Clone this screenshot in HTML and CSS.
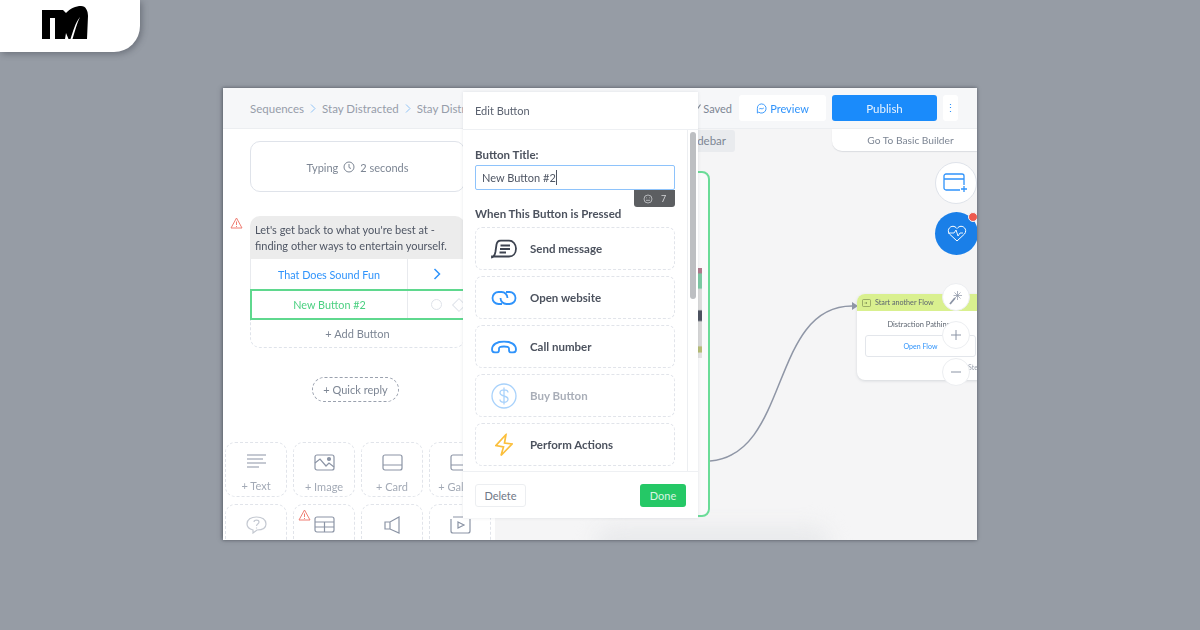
FILE: index.html
```html
<!DOCTYPE html>
<html lang="en">
<head>
    <meta charset="UTF-8">
    <title>Edit Button</title>
    <link rel="stylesheet" href="styles.css">
</head>
<body>
    <div class="logo-tab">
        <svg width="48" height="33" viewBox="0 0 48 33"><path d="M1 4H22L25 7C29 2.500 35 0 40 0C45 0 47 5 47 10L46 33H31.500C34 25 36 17 39 11C34 17 32 26 29.500 33H27.500L25 27L24 33H14V12H9V33H1Z" fill="#000"/></svg>
    </div>

    <div class="window">
        <!-- Top bar -->
        <div class="topbar">
            <div class="crumbs">
                <span>Sequences</span>
                <svg class="crumb-sep" width="6" height="9" viewBox="0 0 6 9" fill="none" stroke="#8fc3f7"><path d="M1 .5L5 4.500L1 8.500"/></svg>
                <span>Stay Distracted</span>
                <svg class="crumb-sep" width="6" height="9" viewBox="0 0 6 9" fill="none" stroke="#8fc3f7"><path d="M1 .5L5 4.500L1 8.500"/></svg>
                <span>Stay Distracted</span>
            </div>
            <div class="top-actions">
                <span class="saved">
                    <svg width="7" height="8" viewBox="0 0 7 8" fill="none" stroke="#7d8694" stroke-width="1.200"><path d="M.5 5L2 7L6.500 .5"/></svg>
                    Saved
                </span>
                <button class="preview-btn">
                    <svg width="11" height="11" viewBox="0 0 12 12" fill="none" stroke="#2f93fb" stroke-width="1"><path d="M6 1A5 5 0 1 1 3 10L1.500 11V6A5 5 0 0 1 6 1Z"/><path d="M3.500 6.500C5 5 6 7.500 8.500 5.500"/></svg>
                    Preview
                </button>
                <button class="publish-btn">Publish</button>
                <button class="more-btn">&#8942;</button>
            </div>
        </div>

        <div class="main">
            <!-- Left column with the message editor -->
            <div class="editor">
                <div class="typing">Typing
                    <svg width="12" height="12" viewBox="0 0 12 12" fill="none" stroke="#7d8694"><circle cx="6" cy="6" r="5"/><path d="M6 3V6.500L8 7.500"/></svg>
                    2 seconds</div>

                <div class="message">
                    <svg class="warn warn-msg" width="13" height="12" viewBox="0 0 13 12" fill="none" stroke="#ef7d72"><path d="M6.500 1L12 11H1Z"/><path d="M6.500 4.500V8M6.500 9V10"/></svg>
                    <div class="bubble">Let's get back to what you're best at - finding other ways to entertain yourself.</div>
                    <div class="msg-btn">
                        <span class="msg-btn-label">That Does Sound Fun</span>
                        <span class="msg-btn-side"><svg width="8" height="12" viewBox="0 0 8 12" fill="none" stroke="#2f93fb" stroke-width="1.500"><path d="M1.500 1L6.500 6L1.500 11"/></svg></span>
                    </div>
                    <div class="msg-btn msg-btn-active">
                        <span class="msg-btn-label">New Button #2</span>
                        <span class="msg-btn-side msg-btn-tools"><i class="ring"></i><i class="diamond"></i></span>
                    </div>
                    <div class="add-btn">+ Add Button</div>
                </div>

                <div class="quick-wrap"><span class="quick">+ Quick reply</span></div>

                <div class="tiles">
                    <div class="tile">
                        <svg width="21" height="16" viewBox="0 0 21 16" fill="none" stroke="#8b94a5" stroke-width="1.200"><path d="M1 1H20M1 5H17M1 9H20M1 13H13"/></svg>
                        <span>+ Text</span>
                    </div>
                    <div class="tile">
                        <svg width="21" height="17" viewBox="0 0 21 17" fill="none" stroke="#8b94a5" stroke-width="1.200"><rect x="1" y="1" width="19" height="15" rx="2"/><path d="M1 9L6 5L12 12L15 9L20 13"/><circle cx="15" cy="5" r="1.500" fill="#8b94a5"/></svg>
                        <span>+ Image</span>
                    </div>
                    <div class="tile">
                        <svg width="21" height="17" viewBox="0 0 21 17" fill="none" stroke="#8b94a5" stroke-width="1.200"><rect x="1" y="1" width="19" height="15" rx="2"/><path d="M1 11H20"/></svg>
                        <span>+ Card</span>
                    </div>
                    <div class="tile">
                        <svg width="21" height="17" viewBox="0 0 21 17" fill="none" stroke="#8b94a5" stroke-width="1.200"><rect x="1" y="1" width="19" height="15" rx="2"/><path d="M1 11H20"/></svg>
                        <span>+ Gallery</span>
                    </div>
                    <div class="tile">
                        <svg class="faded" width="21" height="18" viewBox="0 0 21 18" fill="none" stroke="#8b94a5" stroke-width="1.200"><path d="M10.500 1C16 1 20 3.500 20 8C20 12 16 14 11 14L7 17V14C3 13 1 11 1 8C1 3.500 5 1 10.500 1Z"/><path d="M8 6C8 3.500 13 3.500 13 6C13 8 10.500 8 10.500 10M10.500 11.500V12.500"/></svg>
                    </div>
                    <div class="tile">
                        <svg class="warn warn-tile" width="13" height="12" viewBox="0 0 13 12" fill="none" stroke="#ef7d72"><path d="M6.500 1L12 11H1Z"/><path d="M6.500 4.500V8M6.500 9V10"/></svg>
                        <svg width="21" height="17" viewBox="0 0 21 17" fill="none" stroke="#8b94a5" stroke-width="1.200"><rect x="1" y="1" width="19" height="15" rx="2"/><path d="M1 6H20M1 11H20M10.500 6V16"/></svg>
                    </div>
                    <div class="tile">
                        <svg width="17" height="18" viewBox="0 0 17 18" fill="none" stroke="#8b94a5" stroke-width="1.200"><path d="M1 6H6L15 1V17L6 13H1ZM6 6V13"/></svg>
                    </div>
                    <div class="tile">
                        <svg width="21" height="18" viewBox="0 0 21 18" fill="none" stroke="#8b94a5" stroke-width="1.200"><path d="M1 3V15C1 16 2 17 3 17H18C19 17 20 16 20 15V3"/><path d="M3 1H18"/><path d="M8 6L14 9L8 12Z"/></svg>
                    </div>
                </div>
            </div>

            <!-- Flow canvas -->
            <div class="canvas">
                <div class="canvas-fade"></div>
                <div class="sidebar-chip">Hide Sidebar</div>
                <div class="basic-tab">Go To Basic Builder</div>

                <div class="seq-node"><div class="seq-strip"></div></div>

                <svg class="link" width="160" height="170" viewBox="0 0 160 170" fill="none">
                    <path d="M0 165C80 159 60 10 142 10" stroke="#8f96a6" stroke-width="1.500"/>
                    <path d="M142 6L148 10L142 14Z" fill="#8f96a6"/>
                </svg>

                <div class="flow-node">
                    <div class="flow-head">
                        <svg width="9" height="8" viewBox="0 0 9 8" fill="none" stroke="#7f8f55" stroke-width=".7"><rect x=".5" y=".5" width="8" height="7" rx="1"/><path d="M2.500 4H5M4 3L5 4L4 5"/></svg>
                        Start another Flow
                    </div>
                    <div class="flow-title">Distraction Pathing</div>
                    <div class="flow-open">Open Flow</div>
                    <div class="flow-steps">Steps</div>
                </div>

                <div class="circle circle-add">
                    <svg width="26" height="20" viewBox="0 0 26 20" fill="none" stroke="#2f93fb" stroke-width="1.300"><path d="M17 17H3C2 17 1 16 1 15V3C1 2 2 1 3 1H19C20 1 21 2 21 3V12M1 6H21M21 13V19M18 16H24"/></svg>
                </div>
                <div class="circle circle-health">
                    <svg width="20" height="17" viewBox="0 0 20 17" fill="none" stroke="#fff" stroke-width="1"><path d="M10 16L2.500 9C-1.500 4 5.500 -2 10 3.500C14.500 -2 21.500 4 17.500 9Z"/><path d="M1 8H7L9 5L11 11L13 8H16" stroke-width=".9"/></svg>
                    <i class="health-dot"></i>
                </div>
                <div class="circle circle-tool circle-wand">
                    <svg width="14" height="15" viewBox="0 0 14 15" fill="none" stroke="#8b94a5"><path d="M1 14L6 8" stroke-width="1.800"/><path d="M8.500 1V10M4.500 5.500H13M5.500 2.500L11.500 8.500M11.500 2.500L5.500 8.500" stroke-width=".7"/></svg>
                </div>
                <div class="circle circle-tool circle-plus">
                    <svg width="10" height="10" viewBox="0 0 10 10" stroke="#8b94a5"><path d="M5 0V10M0 5H10"/></svg>
                </div>
                <div class="circle circle-tool circle-minus">
                    <svg width="10" height="10" viewBox="0 0 10 10" stroke="#8b94a5"><path d="M0 5H10"/></svg>
                </div>
            </div>
        </div>

        <!-- Edit button popup -->
        <div class="modal">
            <div class="modal-head">Edit Button</div>
            <div class="modal-body">
                <div class="modal-scroll">
                    <label class="field-label">Button Title:</label>
                    <div class="title-input">New Button #2<i class="caret"></i></div>
                    <div class="count-wrap">
                        <div class="count-badge">
                            <svg width="10" height="10" viewBox="0 0 10 10" fill="none" stroke="#c9cbce" stroke-width=".8"><circle cx="5" cy="5" r="4"/><path d="M3 6.300H7M3.300 3.800H4M6 3.800H6.700"/></svg>
                            <span>7</span>
                        </div>
                    </div>
                    <div class="field-label">When This Button is Pressed</div>
                    <div class="options">
                        <div class="option">
                            <svg width="26" height="19" viewBox="0 0 26 19" fill="none" stroke="#3d4350" stroke-width="1.800"><path d="M1 18C3 17 4 15 4.500 12L5.500 5C6 2.500 8 1 10 1H18C22 1 25 5 25 9C25 14 22 17 18 17H1Z"/><path d="M9.500 6H19M9 9.500H19M8.500 13H15"/></svg>
                            <span>Send message</span>
                        </div>
                        <div class="option">
                            <svg width="26" height="15" viewBox="0 0 26 15" fill="none" stroke="#2f93fb" stroke-width="1.800"><path d="M11 13.500H7.500A6 6 0 0 1 7.500 1.500H10.500A6 6 0 0 1 16.500 7.500"/><path d="M15 1.500H18.500A6 6 0 0 1 18.500 13.500H15.500A6 6 0 0 1 9.500 7.500"/></svg>
                            <span>Open website</span>
                        </div>
                        <div class="option">
                            <svg width="26" height="13" viewBox="0 0 26 13" fill="none" stroke="#2f93fb" stroke-width="1.800"><path d="M1 9C1 4 6 1 13 1C20 1 25 4 25 9C25 11 24 12 22 12H20C18.500 12 18 11 18 9.500V8C18 6.500 16 6 13 6C10 6 8 6.500 8 8V9.500C8 11 7.500 12 6 12H4C2 12 1 11 1 9Z"/></svg>
                            <span>Call number</span>
                        </div>
                        <div class="option option-off">
                            <svg width="26" height="26" viewBox="0 0 26 26" fill="none" stroke="#a9d2fb" stroke-width="1.300"><circle cx="13" cy="13" r="12"/><path d="M17 9.500C17 7.500 15 6.800 13 6.800C11 6.800 9 8 9 9.800C9 14 17 12 17 16.200C17 18 15 19.200 13 19.200C11 19.200 9 18.400 9 16.500M13 4.500V21.500"/></svg>
                            <span>Buy Button</span>
                        </div>
                        <div class="option">
                            <svg width="18" height="23" viewBox="0 0 18 23" fill="none" stroke="#fbbf3c" stroke-width="1.700"><path d="M11 1L1 12L8.500 13.500L6 22L17 10.500L9.500 9.500Z"/></svg>
                            <span>Perform Actions</span>
                        </div>
                    </div>
                </div>
                <div class="scroll-track"><div class="scroll-thumb"></div></div>
            </div>
            <div class="modal-foot">
                <button class="delete-btn">Delete</button>
                <button class="done-btn">Done</button>
            </div>
        </div>
    </div>
</body>
</html>
```

FILE: styles.css
```css
html, body {
    margin: 0;
    padding: 0;
    height: 100%;
}

body {
    width: 1200px;
    height: 630px;
    overflow: hidden;
    background-color: #969ca5;
    font-family: Lato, "Open Sans", sans-serif;
    position: relative;
}

button {
    font-family: inherit;
    border: none;
    padding: 0;
}

/* Logo tab in the corner */
.logo-tab {
    position: absolute;
    top: 0;
    left: 0;
    width: 140px;
    height: 52px;
    background-color: #fff;
    border-bottom-right-radius: 26px;
    box-shadow: 2px 2px 6px rgba(60, 65, 75, 0.45);
    display: flex;
    padding: 6px 0 0 41px;
    box-sizing: border-box;
}

.logo-tab svg {
    display: block;
}

/* App screenshot */
.window {
    position: absolute;
    top: 88px;
    left: 223px;
    width: 754px;
    height: 452px;
    overflow: hidden;
    display: flex;
    flex-direction: column;
    background-color: #fff;
    box-shadow: -1px 0 4px rgba(60, 65, 75, 0.5), 0 0 3px rgba(60, 65, 75, 0.4);
    color: #4f5664;
    filter: blur(0.35px);
}

.topbar {
    height: 41px;
    flex-shrink: 0;
    box-sizing: border-box;
    display: flex;
    justify-content: space-between;
    align-items: center;
    padding: 0 19px 0 27px;
    background-color: #f6f7f9;
    border-bottom: 1px solid #eceef1;
}

/* cut off where the popup starts, the rest would be hidden anyway */
.crumbs {
    display: flex;
    align-items: center;
    width: 213px;
    overflow: hidden;
    font-size: 11.5px;
    color: #969daa;
    white-space: nowrap;
}

.crumb-sep {
    flex-shrink: 0;
    margin: 0 6px;
}

.top-actions {
    display: flex;
    align-items: center;
}

.saved {
    display: flex;
    align-items: center;
    gap: 2px;
    font-size: 11px;
    color: #7d8694;
    margin-right: 7px;
}

.preview-btn {
    width: 87px;
    height: 26px;
    background-color: #fff;
    border-radius: 3px;
    color: #2f93fb;
    font-size: 11px;
    display: flex;
    align-items: center;
    justify-content: center;
    gap: 3px;
    margin-right: 6px;
}

.publish-btn {
    width: 105px;
    height: 26px;
    background-color: #1a8bfb;
    color: #e6f2fe;
    font-size: 11.500px;
    border-radius: 3px;
    margin-right: 6px;
}

.more-btn {
    width: 15px;
    height: 26px;
    background-color: #fff;
    color: #2f93fb;
    font-size: 11px;
    border-radius: 3px;
}

.main {
    flex: 1;
    min-height: 0;
    display: flex;
}

/* Left column */
.editor {
    width: 272px;
    flex-shrink: 0;
    box-sizing: border-box;
    padding: 12px 30px 0 27px;
    background-color: #fff;
}

.typing {
    width: 215px;
    height: 51px;
    box-sizing: border-box;
    border: 1px solid #dfe3ea;
    border-radius: 10px;
    display: flex;
    align-items: center;
    justify-content: center;
    gap: 5px;
    padding: 1px 0 0 0;
    font-size: 11px;
    color: #7d8694;
}

.message {
    position: relative;
    width: 215px;
    margin-top: 24px;
}

.warn {
    position: absolute;
}

.warn-msg {
    top: 1px;
    left: -20px;
}

.bubble {
    height: 43px;
    box-sizing: border-box;
    padding: 6px 0 0 5px;
    background-color: #ececec;
    border-radius: 10px 10px 0 0;
    font-size: 11px;
    line-height: 16px;
    color: #4f5664;
}

.msg-btn {
    display: flex;
    height: 30px;
    align-items: center;
    border-left: 1px solid #e8eaee;
    box-sizing: border-box;
    font-size: 10.800px;
    color: #2f93fb;
}

.msg-btn-label {
    width: 156px;
    flex-shrink: 0;
    text-align: center;
}

.msg-btn-side {
    flex: 1;
    align-self: stretch;
    border-left: 1px solid #e8eaee;
    display: flex;
    align-items: center;
    justify-content: center;
}

.msg-btn-active {
    height: 31px;
    border: 2px solid #5fd88e;
    border-right: none;
    color: #4bd081;
}

.msg-btn-active .msg-btn-label {
    width: 155px;
}

.msg-btn-tools {
    justify-content: flex-start;
    gap: 12px;
    padding-left: 23px;
}

.ring {
    width: 9px;
    height: 9px;
    border: 1px solid #dfe3ea;
    border-radius: 50%;
}

.diamond {
    width: 8px;
    height: 8px;
    border: 1px solid #dfe3ea;
    transform: rotate(45deg);
}

.add-btn {
    height: 28px;
    box-sizing: border-box;
    border: 1px dashed #dfe3ea;
    border-top: none;
    border-radius: 0 0 10px 10px;
    display: flex;
    align-items: center;
    justify-content: center;
    font-size: 11px;
    color: #7d8694;
}

.quick-wrap {
    display: flex;
    justify-content: center;
    margin-top: 29px;
    padding-right: 4px;
}

.quick {
    width: 87px;
    height: 25px;
    box-sizing: border-box;
    border: 1px dashed #9aa1ae;
    border-radius: 13px;
    display: flex;
    align-items: center;
    justify-content: center;
    font-size: 11px;
    color: #7d8694;
}

.tiles {
    display: grid;
    grid-template-columns: repeat(4, 62px);
    grid-auto-rows: 55px;
    gap: 7px 6px;
    margin: 40px 0 0 -25px;
    width: 270px;
}

.tile {
    position: relative;
    box-sizing: border-box;
    border: 1px dashed #e1e4ea;
    border-radius: 10px;
    display: flex;
    flex-direction: column;
    align-items: center;
    padding-top: 11px;
    gap: 9px;
    font-size: 11px;
    color: #a3aab6;
    white-space: nowrap;
    overflow: hidden;
}

.warn-tile {
    top: 4px;
    left: 4px;
}

.faded {
    opacity: 0.5;
}

/* Canvas */
.canvas {
    flex: 1;
    position: relative;
    background-color: #f5f5f6;
    overflow: hidden;
}

.sidebar-chip {
    position: absolute;
    top: 1px;
    left: 150px;
    width: 90px;
    height: 22px;
    box-sizing: border-box;
    padding-right: 9px;
    background-color: #e9ebee;
    border-radius: 3px;
    text-align: right;
    line-height: 22px;
    font-size: 11.500px;
    color: #7d8694;
}

.basic-tab {
    position: absolute;
    top: 0;
    right: 0;
    width: 145px;
    height: 22px;
    box-sizing: border-box;
    padding-left: 12px;
    background-color: #fff;
    border-bottom-left-radius: 10px;
    box-shadow: 0 1px 1px rgba(120, 130, 145, 0.2);
    text-align: center;
    line-height: 23px;
    font-size: 10.200px;
    color: #7d8694;
}

.seq-node {
    position: absolute;
    top: 42px;
    left: 60px;
    width: 155px;
    height: 346px;
    box-sizing: border-box;
    border: 2px solid #6bdc98;
    border-radius: 8px;
    background-color: #fafafb;
}

/* only the sliver right of the popup is visible */
.seq-strip {
    position: absolute;
    top: 95px;
    right: 6px;
    width: 4px;
    height: 90px;
    background: linear-gradient(#b0798c 0, #b0798c 5%, #7cc9a3 7%, #7cc9a3 22%, #dcdcdc 24%, #dcdcdc 46%, #4d5260 48%, #4d5260 58%, #d8d8d8 60%, #d8d8d8 86%, #b7bd75 88%, #b7bd75 93%, #e3e3e3 95%);
}

.link {
    position: absolute;
    top: 167px;
    left: 215px;
}

.flow-node {
    position: absolute;
    top: 165px;
    left: 362px;
    width: 140px;
    height: 86px;
    background-color: #fff;
    border-radius: 8px;
    box-shadow: 0 1px 3px rgba(120, 130, 145, 0.25);
    font-size: 7.500px;
    overflow: hidden;
}

.flow-head {
    height: 17px;
    background-color: #d9f08f;
    display: flex;
    align-items: center;
    gap: 4px;
    padding-left: 5px;
    font-size: 7.200px;
    color: #5d6570;
}

.flow-title {
    text-align: center;
    padding: 9px 16px 0 0;
    width: 124px;
    color: #5d6570;
    white-space: nowrap;
    overflow: hidden;
}

.flow-open {
    margin: 6px 0 0 8px;
    width: 111px;
    height: 22px;
    box-sizing: border-box;
    border: 1px solid #e3e6eb;
    border-radius: 3px;
    text-align: center;
    line-height: 20px;
    color: #2f93fb;
    font-size: 7px;
}

.flow-steps {
    margin: 6px 0 0 111px;
    color: #9aa1ae;
    font-size: 7px;
}

.circle {
    position: absolute;
    box-sizing: border-box;
    border-radius: 50%;
    display: flex;
    align-items: center;
    justify-content: center;
    background-color: #fff;
}

.circle-add {
    top: 33px;
    left: 440px;
    width: 42px;
    height: 42px;
    border: 1px solid #dfe3ea;
}

.circle-health {
    top: 83px;
    left: 440px;
    width: 43px;
    height: 43px;
    background-color: #1a7fe8;
}

.health-dot {
    position: absolute;
    top: 0;
    right: 0;
    width: 8px;
    height: 8px;
    border-radius: 50%;
    background-color: #ee5a4f;
    border: 1px solid #f4f5f6;
}

.circle-tool {
    width: 28px;
    height: 28px;
    border: 1px solid #eceef1;
    left: 447px;
}

.circle-wand {
    top: 154px;
}

.circle-plus {
    top: 192px;
}

.circle-minus {
    top: 229px;
}

.canvas-fade {
    position: absolute;
    left: 100px;
    bottom: -22px;
    width: 235px;
    height: 36px;
    background-color: #e9eaec;
    border-radius: 24px;
    filter: blur(10px);
}

/* Popup */
.modal {
    position: absolute;
    top: 4px;
    left: 240px;
    width: 235px;
    height: 426px;
    background-color: #fff;
    display: flex;
    flex-direction: column;
    box-shadow: 0 0 3px rgba(90, 100, 115, 0.15);
}

.modal-head {
    height: 38px;
    flex-shrink: 0;
    box-sizing: border-box;
    padding-left: 12px;
    line-height: 37px;
    border-bottom: 1px solid #eef0f3;
    font-size: 11px;
    color: #5b6270;
}

.modal-body {
    flex: 1;
    min-height: 0;
    display: flex;
    overflow: hidden;
}

.modal-scroll {
    width: 224px;
    box-sizing: border-box;
    padding: 18px 12px 0 12px;
    flex-shrink: 0;
}

.scroll-track {
    flex: 1;
    border-left: 1px solid #eceef1;
    padding: 2px 0 0 2px;
}

.scroll-thumb {
    width: 6px;
    height: 167px;
    background-color: #bdbfc2;
    border-radius: 3px;
}

.field-label {
    display: block;
    font-size: 11.500px;
    font-weight: 700;
    color: #4c525e;
    line-height: 14px;
}

.title-input {
    margin-top: 3px;
    height: 25px;
    box-sizing: border-box;
    border: 1px solid #8ec3fb;
    border-radius: 2px;
    padding-left: 6px;
    font-size: 11px;
    color: #4f5664;
    display: flex;
    align-items: center;
}

.caret {
    width: 1px;
    height: 15px;
    background-color: #4f5664;
}

.count-wrap {
    display: flex;
    justify-content: flex-end;
}

.count-badge {
    width: 41px;
    height: 17px;
    background-color: #5c5e61;
    border-radius: 0 0 3px 3px;
    display: flex;
    align-items: center;
    justify-content: center;
    gap: 8px;
    font-size: 9px;
    color: #d5d6d8;
}

.options {
    display: flex;
    flex-direction: column;
    gap: 6px;
    margin-top: 6px;
}

.option {
    height: 43px;
    flex-shrink: 0;
    box-sizing: border-box;
    border: 1px dashed #e1e4ea;
    border-radius: 7px;
    display: flex;
    align-items: center;
    font-size: 11.500px;
    font-weight: 700;
    color: #4c525e;
    position: relative;
    padding-left: 54px;
}

.option svg {
    position: absolute;
    left: 15px;
    top: 50%;
    transform: translateY(-50%);
}

.option:last-child svg {
    left: 19px;
}

.option-off {
    color: #a9aeb8;
}

.modal-foot {
    height: 47px;
    flex-shrink: 0;
    box-sizing: border-box;
    border-top: 1px solid #eef0f3;
    padding: 12px 12px 0 12px;
    display: flex;
    justify-content: space-between;
    align-items: flex-start;
}

.delete-btn {
    width: 51px;
    height: 23px;
    background-color: #fff;
    border: 1px solid #eceef1;
    border-radius: 3px;
    font-size: 11px;
    color: #6f7786;
}

.done-btn {
    width: 46px;
    height: 23px;
    background-color: #25c866;
    border-radius: 3px;
    font-size: 11px;
    color: #d8f5e3;
}
```
